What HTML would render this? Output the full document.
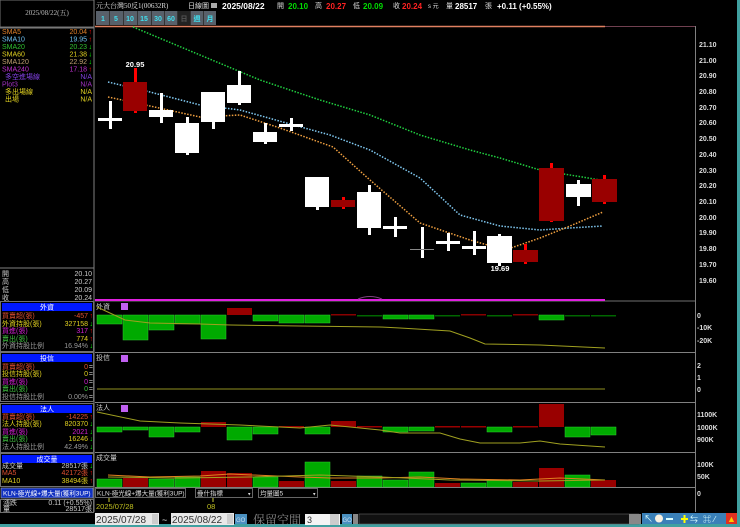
<!DOCTYPE html>
<html><head><meta charset="utf-8"><style>
html,body{margin:0;padding:0;background:#000;width:740px;height:527px;overflow:hidden}
svg{display:block;font-family:"Liberation Sans","Noto Sans CJK TC",sans-serif}
.s{font-family:"Liberation Serif","Noto Serif CJK SC",serif}
</style></head><body>
<svg width="740" height="527" viewBox="0 0 740 527" xmlns="http://www.w3.org/2000/svg" font-size="7">
<rect width="740" height="527" fill="#000"/>
<!-- left panel -->
<rect x="0" y="0" width="94" height="27" fill="#000" stroke="#707070"/>
<text x="47" y="15" fill="#bbb" text-anchor="middle" class="s">2025/08/22(五)</text>
<line x1="94" y1="0" x2="94" y2="512" stroke="#808080"/>
<line x1="0" y1="28" x2="94" y2="28" stroke="#808080"/>
<g text-anchor="start">
<text x="2" y="34" fill="#e0802a">SMA5</text>
<text x="2" y="41.5" fill="#70c0f0">SMA10</text>
<text x="2" y="49" fill="#30c030">SMA20</text>
<text x="2" y="56.5" fill="#e0d020">SMA60</text>
<text x="2" y="64" fill="#c0a070">SMA120</text>
<text x="2" y="71.5" fill="#c030d0">SMA240</text>
<text x="5" y="79" fill="#8040e0">多空進場線</text>
<text x="2" y="86.5" fill="#a030c0">Plot3</text>
<text x="5" y="94" fill="#e0d020">多出場線</text>
<text x="5" y="101.5" fill="#e0d020">出場</text>
</g>
<g text-anchor="end">
<text x="87" y="34" fill="#e0802a">20.04</text><text x="92" y="34" fill="#f00">↑</text>
<text x="87" y="41.5" fill="#70c0f0">19.95</text><text x="92" y="41.5" fill="#f00">↑</text>
<text x="87" y="49" fill="#30c030">20.23</text><text x="92" y="49" fill="#0f0">↓</text>
<text x="87" y="56.5" fill="#e0d020">21.38</text><text x="92" y="56.5" fill="#0f0">↓</text>
<text x="87" y="64" fill="#c0a070">22.92</text><text x="92" y="64" fill="#0f0">↓</text>
<text x="87" y="71.5" fill="#c030d0">17.18</text><text x="92" y="71.5" fill="#f00">↑</text>
<text x="92" y="79" fill="#8040e0">N/A</text>
<text x="92" y="86.5" fill="#a030c0">N/A</text>
<text x="92" y="94" fill="#e0d020">N/A</text>
<text x="92" y="101.5" fill="#e0d020">N/A</text>
</g>
<line x1="0" y1="268" x2="94" y2="268" stroke="#808080"/>
<g fill="#ccc">
<text x="2" y="276">開</text><text x="2" y="284">高</text><text x="2" y="292">低</text><text x="2" y="300">收</text>
<g text-anchor="end"><text x="92" y="276">20.10</text><text x="92" y="284">20.27</text><text x="92" y="292">20.09</text><text x="92" y="300">20.24</text></g>
</g>
<!-- sections -->
<g stroke="#707070" fill="none">
<rect x="0.5" y="301.5" width="93" height="50"/>
<rect x="0.5" y="352.5" width="93" height="49"/>
<rect x="0.5" y="403.5" width="93" height="49"/>
<rect x="0.5" y="453.5" width="93" height="33"/>
</g>
<rect x="2" y="303" width="90" height="8" fill="#0018ff"/><text x="47" y="309.5" fill="#fff" text-anchor="middle">外資</text>
<rect x="2" y="354" width="90" height="8" fill="#0018ff"/><text x="47" y="360.5" fill="#fff" text-anchor="middle">投信</text>
<rect x="2" y="405" width="90" height="8" fill="#0018ff"/><text x="47" y="411.5" fill="#fff" text-anchor="middle">法人</text>
<rect x="2" y="455" width="90" height="8" fill="#0018ff"/><text x="47" y="461.5" fill="#fff" text-anchor="middle">成交量</text>
<g>
<text x="2" y="318" fill="#e05030">買賣超(張)</text><text x="2" y="326" fill="#e0d020">外資持股(張)</text><text x="2" y="333" fill="#d020d0">買進(張)</text><text x="2" y="341" fill="#40c040">賣出(張)</text><text x="2" y="348" fill="#999">外資持股比例</text>
<g text-anchor="end"><text x="88" y="318" fill="#e05030">-457</text><text x="88" y="326" fill="#e0d020">327158</text><text x="88" y="333" fill="#d020d0">317</text><text x="88" y="341" fill="#e0d020">774</text><text x="88" y="348" fill="#999">16.94%</text>
<text x="93" y="318" fill="#f00">↑</text><text x="93" y="326" fill="#0f0">↓</text><text x="93" y="333" fill="#f00">↑</text><text x="93" y="341" fill="#f00">↑</text><text x="93" y="348" fill="#0f0">↓</text></g>
<text x="2" y="369" fill="#e05030">買賣超(張)</text><text x="2" y="376" fill="#e0d020">投信持股(張)</text><text x="2" y="384" fill="#d020d0">買進(張)</text><text x="2" y="391" fill="#40c040">賣出(張)</text><text x="2" y="399" fill="#999">投信持股比例</text>
<g text-anchor="end"><text x="88" y="369" fill="#e05030">0</text><text x="88" y="376" fill="#e0d020">0</text><text x="88" y="384" fill="#d020d0">0</text><text x="88" y="391" fill="#40c040">0</text><text x="88" y="399" fill="#999">0.00%</text>
<text x="93" y="369" fill="#ccc">=</text><text x="93" y="376" fill="#ccc">=</text><text x="93" y="384" fill="#ccc">=</text><text x="93" y="391" fill="#ccc">=</text><text x="93" y="399" fill="#ccc">=</text></g>
<text x="2" y="419" fill="#e05030">買賣超(張)</text><text x="2" y="426" fill="#e0d020">法人持股(張)</text><text x="2" y="434" fill="#d020d0">買進(張)</text><text x="2" y="441" fill="#40c040">賣出(張)</text><text x="2" y="449" fill="#999">法人持股比例</text>
<g text-anchor="end"><text x="88" y="419" fill="#e05030">-14225</text><text x="88" y="426" fill="#e0d020">820370</text><text x="88" y="434" fill="#d020d0">2021</text><text x="88" y="441" fill="#e0d020">16246</text><text x="88" y="449" fill="#999">42.49%</text>
<text x="93" y="419" fill="#f00">↑</text><text x="93" y="426" fill="#0f0">↓</text><text x="93" y="434" fill="#0f0">↓</text><text x="93" y="441" fill="#0f0">↓</text><text x="93" y="449" fill="#0f0">↓</text></g>
<text x="2" y="468" fill="#ccc">成交量</text><text x="2" y="475" fill="#e05030">MA5</text><text x="2" y="483" fill="#e0d020">MA10</text>
<g text-anchor="end"><text x="88" y="468" fill="#ccc">28517張</text><text x="88" y="475" fill="#e05030">42172張</text><text x="88" y="483" fill="#e0d020">38494張</text>
<text x="93" y="468" fill="#0f0">↓</text><text x="93" y="475" fill="#f00">↑</text><text x="93" y="483" fill="#f00">↑</text></g>
</g>
<rect x="1" y="488" width="92" height="10" fill="#1030c0" stroke="#aaa" stroke-width="0.6"/>
<text x="3" y="495.5" fill="#fff" font-size="6.5">KLN-極光線+爆大量(獲利3UP)</text>
<rect x="0.5" y="499.5" width="93" height="13" fill="none" stroke="#707070"/>
<text x="3" y="505" fill="#ccc">漲跌</text><text x="92" y="505" fill="#ccc" text-anchor="end">0.11 (+0.55%)</text>
<text x="3" y="511" fill="#ccc">量</text><text x="92" y="511" fill="#ccc" text-anchor="end">28517張</text>

<!-- top title -->
<text x="96" y="8" fill="#ddd" class="s">元大台灣50反1(00632R)</text>
<text x="188" y="8" fill="#ddd">日線圖</text>
<rect x="211" y="3" width="6" height="5" fill="#aaa"/>
<text x="222" y="9" fill="#fff" font-size="8.5" font-weight="bold">2025/08/22</text>
<text x="277" y="8" fill="#ddd">開</text><text x="288" y="9" fill="#0d0" font-size="8" font-weight="bold">20.10</text>
<text x="315" y="8" fill="#ddd">高</text><text x="326" y="9" fill="#f22" font-size="8" font-weight="bold">20.27</text>
<text x="353" y="8" fill="#ddd">低</text><text x="363" y="9" fill="#0d0" font-size="8" font-weight="bold">20.09</text>
<text x="393" y="8" fill="#ddd">收</text><text x="402" y="9" fill="#f22" font-size="8" font-weight="bold">20.24</text>
<text x="428" y="8" fill="#ddd" font-size="6">s 元</text>
<text x="446" y="8" fill="#ddd">量</text><text x="455" y="9" fill="#fff" font-size="8" font-weight="bold">28517</text>
<text x="485" y="8" fill="#ddd">張</text>
<text x="497" y="9" fill="#fff" font-size="8" font-weight="bold">+0.11 (+0.55%)</text>
<!-- period buttons -->
<g>
<rect x="96" y="11" width="120" height="14" fill="#58606a"/>
<rect x="178" y="11" width="12" height="14" fill="#222"/>
<g stroke="#333"><line x1="109.5" y1="11" x2="109.5" y2="25"/><line x1="123.5" y1="11" x2="123.5" y2="25"/><line x1="137.5" y1="11" x2="137.5" y2="25"/><line x1="151.5" y1="11" x2="151.5" y2="25"/><line x1="164.5" y1="11" x2="164.5" y2="25"/><line x1="177.5" y1="11" x2="177.5" y2="25"/><line x1="190.5" y1="11" x2="190.5" y2="25"/><line x1="203.5" y1="11" x2="203.5" y2="25"/></g>
<g fill="#40e0f0" text-anchor="middle" font-weight="bold"><text x="103" y="21">1</text><text x="116" y="21">5</text><text x="130" y="21">10</text><text x="144" y="21">15</text><text x="158" y="21">30</text><text x="171" y="21">60</text><text x="184" y="21" fill="#555">日</text><text x="197" y="21">週</text><text x="210" y="21">月</text></g>
</g>
<!-- main frame -->
<line x1="95" y1="26.5" x2="695" y2="26.5" stroke="#704050"/>
<line x1="95" y1="26.5" x2="605" y2="26.5" stroke="#e08060" stroke-width="1.5"/>
<line x1="695.5" y1="26" x2="695.5" y2="512" stroke="#808080"/>
<line x1="95" y1="301" x2="695" y2="301" stroke="#707070"/>
<line x1="95" y1="300" x2="605" y2="300" stroke="#e020e0" stroke-width="2"/>
<path d="M358 299 Q370 294 382 299" stroke="#804080" fill="none"/>
<g stroke="#808080"><line x1="95" y1="352.5" x2="695" y2="352.5"/><line x1="95" y1="402.5" x2="695" y2="402.5"/><line x1="95" y1="452.5" x2="695" y2="452.5"/><line x1="95" y1="487.5" x2="695" y2="487.5"/></g>
<!-- price axis -->
<g fill="#ddd" font-weight="bold">
<text x="699" y="47">21.10</text><text x="699" y="63">21.00</text><text x="699" y="78">20.90</text><text x="699" y="94">20.80</text><text x="699" y="110">20.70</text><text x="699" y="125">20.60</text><text x="699" y="141">20.50</text><text x="699" y="157">20.40</text><text x="699" y="173">20.30</text><text x="699" y="188">20.20</text><text x="699" y="204">20.10</text><text x="699" y="220">20.00</text><text x="699" y="235">19.90</text><text x="699" y="251">19.80</text><text x="699" y="267">19.70</text><text x="699" y="283">19.60</text>
<text x="697" y="318">0</text><text x="697" y="330">-10K</text><text x="697" y="343">-20K</text>
<text x="697" y="368">2</text><text x="697" y="380">1</text><text x="697" y="392">0</text>
<text x="697" y="417">1100K</text><text x="697" y="430">1000K</text><text x="697" y="442">900K</text>
<text x="697" y="467">100K</text><text x="697" y="479">50K</text><text x="697" y="496">0</text>
</g>
<!-- MAs -->
<g fill="none" stroke-width="1.5" stroke-dasharray="1.5 1.5">
<polyline stroke="#20d040" points="133,27 200,55 260,80 320,100 370,115 420,135 470,150 500,158 540,170 600,180"/>
<polyline stroke="#80c8f0" points="108,82 150,92 200,105 240,110 290,124 330,135 370,150 420,178 460,215 500,226 540,230 570,228 603,226"/>
<polyline stroke="#f0a040" points="108,97 150,106 200,117 240,115 280,128 333,147 370,180 420,223 470,240 505,250 540,238 570,226 603,212"/>
</g>
<!-- candles -->
<g>
<rect x="98" y="118" width="24" height="3" fill="#fff"/><rect x="109" y="101" width="3" height="28" fill="#fff"/>
<rect x="134" y="68" width="3" height="45" fill="#f00"/><rect x="123" y="82" width="24" height="29" fill="#900"/>
<rect x="160" y="93" width="3" height="30" fill="#fff"/><rect x="149" y="110" width="24" height="7" fill="#fff"/>
<rect x="186" y="117" width="3" height="38" fill="#fff"/><rect x="175" y="123" width="24" height="30" fill="#fff"/>
<rect x="212" y="92" width="3" height="37" fill="#fff"/><rect x="201" y="92" width="24" height="30" fill="#fff"/>
<rect x="238" y="71" width="3" height="34" fill="#fff"/><rect x="227" y="85" width="24" height="18" fill="#fff"/>
<rect x="264" y="123" width="3" height="21" fill="#fff"/><rect x="253" y="132" width="24" height="10" fill="#fff"/>
<rect x="290" y="118" width="3" height="13" fill="#fff"/><rect x="279" y="124" width="24" height="3" fill="#fff"/>
<rect x="316" y="177" width="3" height="33" fill="#fff"/><rect x="305" y="177" width="24" height="30" fill="#fff"/>
<rect x="342" y="197" width="3" height="12" fill="#f00"/><rect x="331" y="200" width="24" height="7" fill="#900"/>
<rect x="368" y="185" width="3" height="50" fill="#fff"/><rect x="357" y="192" width="24" height="36" fill="#fff"/>
<rect x="394" y="217" width="3" height="20" fill="#fff"/><rect x="383" y="226" width="24" height="3" fill="#fff"/>
<rect x="421" y="227" width="3" height="31" fill="#fff"/><rect x="410" y="249" width="24" height="1" fill="#888"/>
<rect x="447" y="233" width="3" height="18" fill="#fff"/><rect x="436" y="241" width="24" height="3" fill="#fff"/>
<rect x="473" y="231" width="3" height="24" fill="#fff"/><rect x="462" y="246" width="24" height="3" fill="#fff"/>
<rect x="498" y="234" width="3" height="32" fill="#fff"/><rect x="487" y="236" width="25" height="27" fill="#fff"/>
<rect x="524" y="244" width="3" height="20" fill="#f00"/><rect x="513" y="250" width="25" height="12" fill="#900"/>
<rect x="550" y="163" width="3" height="59" fill="#f00"/><rect x="539" y="168" width="25" height="53" fill="#900"/>
<rect x="577" y="180" width="3" height="26" fill="#fff"/><rect x="566" y="184" width="25" height="13" fill="#fff"/>
<rect x="603" y="175" width="3" height="29" fill="#f00"/><rect x="592" y="179" width="25" height="23" fill="#900"/>
</g>
<text x="135" y="67" fill="#fff" text-anchor="middle" font-weight="bold" font-size="7.5">20.95</text>
<text x="500" y="271" fill="#fff" text-anchor="middle" font-weight="bold" font-size="7.5">19.69</text>
<!-- subpanel labels -->
<g fill="#ccc"><text x="96" y="309">外資</text><text x="96" y="360">投信</text><text x="96" y="410">法人</text><text x="96" y="460">成交量</text></g>
<g fill="#c060f0"><rect x="121" y="303" width="7" height="7"/><rect x="121" y="355" width="7" height="7"/><rect x="121" y="405" width="7" height="7"/></g>
<!-- 外資 bars -->
<g fill="#0a0" stroke="#3c3" stroke-width="0.5">
<rect x="97" y="315" width="25" height="9"/><rect x="123" y="315" width="25" height="25"/><rect x="149" y="315" width="25" height="15"/><rect x="175" y="315" width="25" height="9"/><rect x="201" y="315" width="25" height="24"/><rect x="253" y="315" width="25" height="6"/><rect x="279" y="315" width="25" height="8"/><rect x="305" y="315" width="25" height="8"/><rect x="383" y="315" width="25" height="4"/><rect x="409" y="315" width="25" height="4"/><rect x="539" y="315" width="25" height="5"/>
</g>
<rect x="227" y="308" width="25" height="7" fill="#900"/>
<g fill="#800"><rect x="331" y="314" width="25" height="1.5"/><rect x="461" y="314" width="25" height="1.5"/><rect x="513" y="314" width="25" height="1.5"/></g>
<g fill="#060"><rect x="357" y="315" width="25" height="1.5"/><rect x="435" y="315" width="25" height="1.5"/><rect x="487" y="315" width="25" height="1.5"/><rect x="565" y="315" width="25" height="1.5"/><rect x="591" y="315" width="25" height="1.5"/></g>
<polyline fill="none" stroke="#a0a020" points="97,307 125,320 150,323 200,324 230,325 300,326 380,327 400,328 450,331 470,338 485,344 540,345 605,348"/>
<!-- 投信 -->
<line x1="97" y1="389" x2="605" y2="389" stroke="#909020"/>
<!-- 法人 bars -->
<g fill="#0a0" stroke="#3c3" stroke-width="0.5">
<rect x="97" y="427" width="25" height="5"/><rect x="123" y="427" width="25" height="3"/><rect x="149" y="427" width="25" height="10"/><rect x="175" y="427" width="25" height="5"/><rect x="227" y="427" width="25" height="13"/><rect x="253" y="427" width="25" height="7"/><rect x="305" y="427" width="25" height="7"/><rect x="383" y="427" width="25" height="5"/><rect x="409" y="427" width="25" height="4"/><rect x="487" y="427" width="25" height="5"/><rect x="565" y="427" width="25" height="10"/><rect x="591" y="427" width="25" height="8"/>
</g>
<g fill="#900"><rect x="201" y="422" width="25" height="5"/><rect x="331" y="421" width="25" height="6"/><rect x="539" y="404" width="25" height="23"/><rect x="279" y="426" width="25" height="1.5"/><rect x="357" y="426" width="25" height="1.5"/><rect x="435" y="426" width="25" height="1.5"/><rect x="461" y="426" width="25" height="1.5"/><rect x="513" y="426" width="25" height="1.5"/></g>
<polyline fill="none" stroke="#a0a020" points="97,412 140,421 180,423 240,425 300,428 330,425 380,430 400,433 440,433 460,439 480,443 520,443 540,441 560,444 605,447"/>
<!-- volume bars -->
<g fill="#0a0" stroke="#3c3" stroke-width="0.5">
<rect x="97" y="479" width="25" height="8"/><rect x="149" y="479" width="25" height="8"/><rect x="175" y="477" width="25" height="10"/><rect x="253" y="477" width="25" height="10"/><rect x="305" y="462" width="25" height="25"/><rect x="357" y="476" width="25" height="11"/><rect x="383" y="480" width="25" height="7"/><rect x="409" y="472" width="25" height="15"/><rect x="461" y="483" width="25" height="4"/><rect x="487" y="480" width="25" height="7"/><rect x="565" y="475" width="25" height="12"/>
</g>
<g fill="#900"><rect x="123" y="478" width="25" height="9"/><rect x="201" y="471" width="25" height="16"/><rect x="227" y="473" width="25" height="14"/><rect x="279" y="481" width="25" height="6"/><rect x="331" y="481" width="25" height="6"/><rect x="435" y="483" width="25" height="4"/><rect x="513" y="482" width="25" height="5"/><rect x="539" y="468" width="25" height="19"/><rect x="591" y="480" width="25" height="7"/></g>
<polyline fill="none" stroke="#e08020" points="108,475 150,477 200,476 230,474 300,477 330,478 380,478 420,477 460,479 520,480 560,478 605,480"/>
<polyline fill="none" stroke="#a0a020" points="108,477 180,478 250,477 320,475 380,477 450,480 540,481 605,480"/>
<!-- combobox row -->
<rect x="95" y="488" width="600" height="10" fill="#000"/>
<rect x="95.5" y="488.5" width="90" height="9" fill="none" stroke="#aaa" stroke-width="0.6"/>
<text x="97" y="495.5" fill="#ddd" font-size="6.5">KLN-極光線+爆大量(獲利3UP)</text>
<rect x="195.5" y="488.5" width="57" height="9" fill="none" stroke="#aaa" stroke-width="0.6"/><text x="197" y="495.5" fill="#ddd" font-size="6.5">疊什指標</text><text x="248" y="495.5" fill="#ddd" font-size="5">▾</text>
<rect x="258.5" y="488.5" width="59" height="9" fill="none" stroke="#aaa" stroke-width="0.6"/><text x="260" y="495.5" fill="#ddd" font-size="6.5">均量圖5</text><text x="313" y="495.5" fill="#ddd" font-size="5">▾</text>
<line x1="109" y1="498" x2="109" y2="502" stroke="#cc3"/><line x1="213" y1="498" x2="213" y2="502" stroke="#cc3"/>
<text x="96" y="509" fill="#c0c020" font-size="7.5">2025/07/28</text><text x="207" y="509" fill="#c0c020" font-size="7.5">08</text>
<!-- bottom bar -->
<rect x="0" y="524" width="740" height="3" fill="#40a0a0"/>
<rect x="737" y="0" width="3" height="527" fill="#40a0a0"/>
<rect x="95" y="513" width="64" height="12" fill="#e8e8e8"/><text x="96" y="523" fill="#333" font-size="10">2025/07/28</text><rect x="152" y="514" width="6" height="10" fill="#ccc"/>
<text x="162" y="523" fill="#ddd" font-size="9">~</text>
<rect x="171" y="513" width="63" height="12" fill="#e8e8e8"/><text x="172" y="523" fill="#333" font-size="10">2025/08/22</text><rect x="227" y="514" width="6" height="10" fill="#ccc"/>
<rect x="235" y="514" width="12" height="10" fill="#4a90c0"/><text x="236" y="522" fill="#cde" font-size="6">GO</text>
<text x="253" y="524" fill="#888" font-size="12" class="s">保留空間</text>
<rect x="305" y="514" width="35" height="11" fill="#f4f4f4"/><text x="307" y="523" fill="#333" font-size="9">3</text><rect x="330" y="514" width="9" height="11" fill="#ccc"/>
<rect x="342" y="514" width="10" height="10" fill="#4a90c0"/><text x="342.5" y="522" fill="#cde" font-size="6">GO</text>
<rect x="353" y="514" width="5" height="10" fill="#888"/>
<rect x="359" y="514" width="280" height="10" fill="#111" stroke="#666" stroke-width="0.6"/>
<rect x="629" y="514" width="12" height="10" fill="#888"/>
<rect x="642" y="513" width="95" height="11" fill="#3a80b8"/>
<g fill="#dff"><text x="644" y="522" font-size="9">↖</text><circle cx="659" cy="518.5" r="4" fill="#f8f0e0"/><rect x="666" y="518" width="7" height="2" /><rect x="681" y="518" width="7" height="2" fill="#ff0"/><rect x="683.5" y="515" width="2" height="8" fill="#ff0"/><text x="690" y="522" font-size="8">⇆</text><text x="703" y="522" font-size="8">⌘</text><text x="714" y="522" font-size="8">⁄</text></g>
<rect x="726" y="513" width="11" height="11" fill="#e03020"/><text x="727" y="522" fill="#fc0" font-size="9">▲</text>
</svg>
</body></html>
